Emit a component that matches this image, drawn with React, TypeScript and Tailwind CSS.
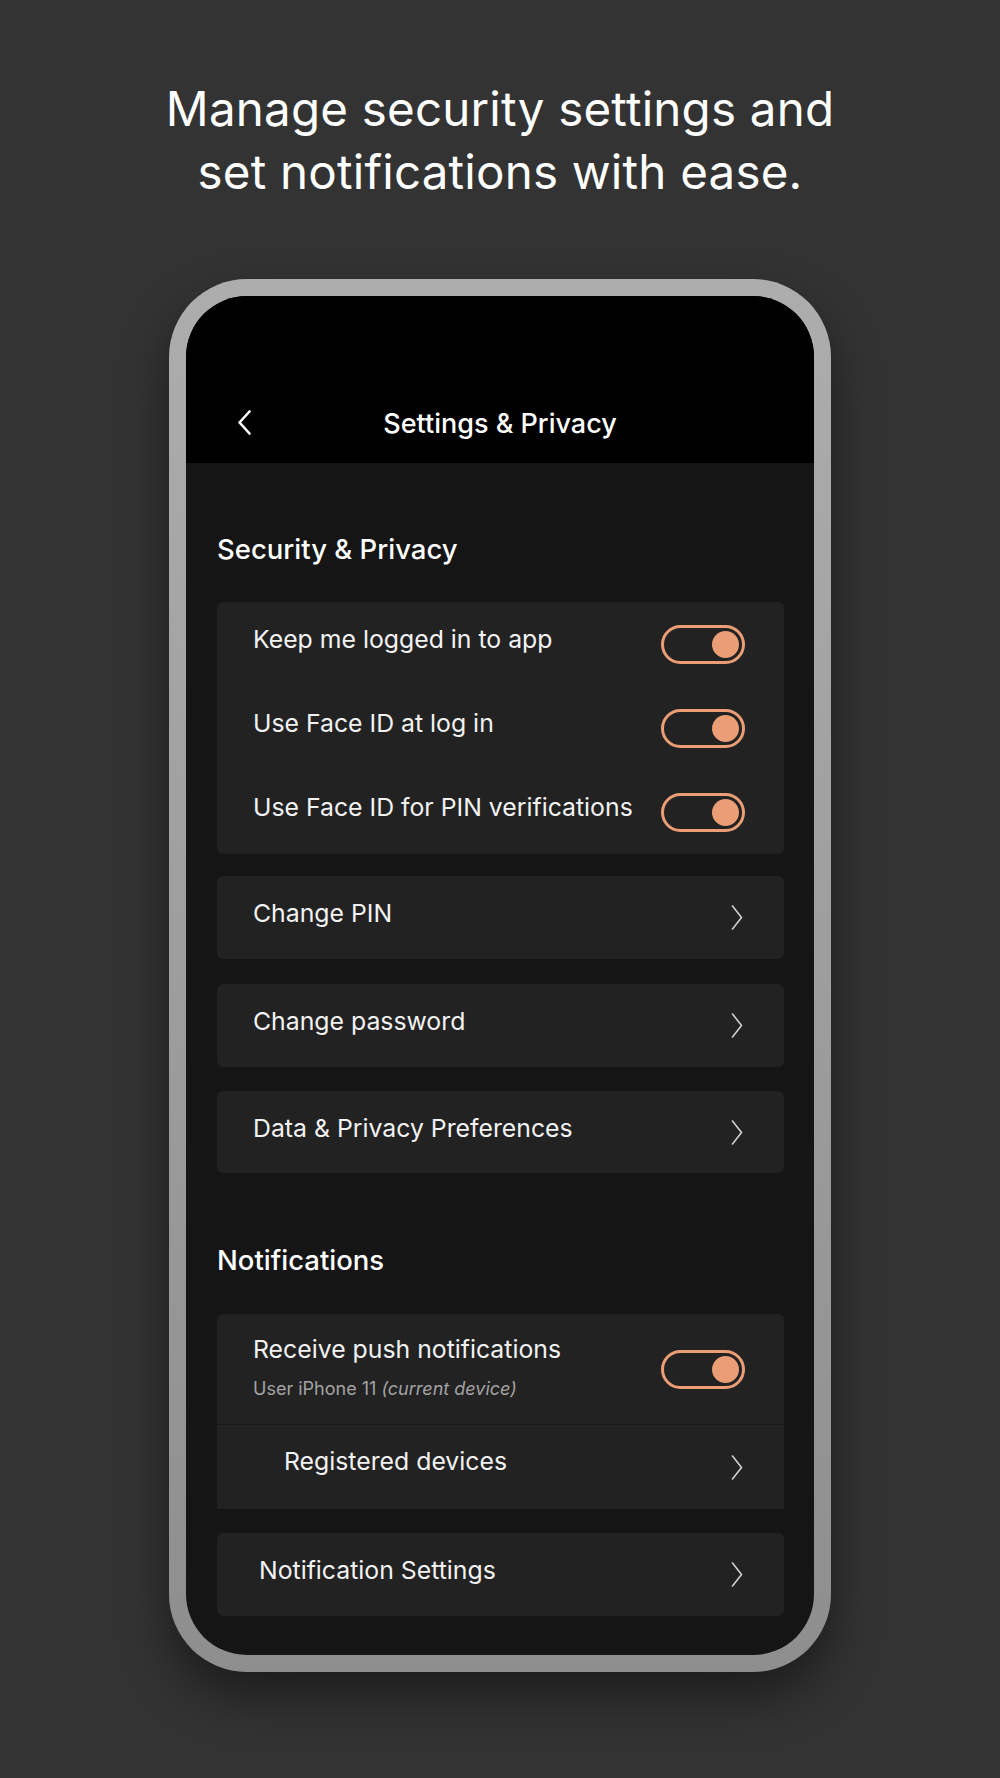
import React from "react";

const Chevron = () => (
  <svg width="12" height="25" viewBox="0 0 12 25" fill="none">
    <polyline points="1.5,1 10.5,12.5 1.5,24" stroke="#d0d0d0" strokeWidth="1.6" strokeLinecap="round" strokeLinejoin="round" />
  </svg>
);

const Toggle = () => (
  <div className="w-[84px] h-[39px] rounded-full border-[3.5px] border-[#eb9d75] flex items-center justify-end pr-[3px] shrink-0">
    <div className="w-[27px] h-[27px] rounded-full bg-[#eb9d75]" />
  </div>
);

const NavCard = ({ label, h = "h-[83px]", pl = "pl-[36px]", mt }: { label: string; h?: string; pl?: string; mt: string }) => (
  <div className={`${mt} ${h} ${pl} pr-[41px] rounded-[6px] bg-[#222222] flex items-center justify-between`}>
    <span className="text-[24.8px] leading-[30px] text-[#f2f2f2] mb-[9px]">{label}</span>
    <Chevron />
  </div>
);

export default function App() {
  return (
    <div className="w-[1000px] h-[1778px] bg-[#333333] flex flex-col items-center font-['Inter','Lato',sans-serif] overflow-hidden">
      <h1 className="pt-[77px] text-[47.5px] leading-[63px] text-white text-center font-normal tracking-[0.2px]">
        Manage security settings and
        <br />
        set notifications with ease.
      </h1>
      <div className="mt-[76px] w-[662px] h-[1393px] rounded-[78px] p-[17px] bg-gradient-to-b from-[#adadad] to-[#8e8e8e] shadow-[0_24px_50px_rgba(0,0,0,0.45)]">
        <div className="h-full rounded-[61px] overflow-hidden bg-[#151515] flex flex-col">
          <div className="h-[167px] bg-black shrink-0 pt-[102px]">
            <div className="grid grid-cols-[1fr_auto_1fr] items-center h-[48px]">
              <div className="pl-[52px] flex items-center">
                <svg width="13" height="25" viewBox="0 0 13 25" fill="none">
                  <polyline points="11.5,1.5 1.5,12.5 11.5,23.5" stroke="#ffffff" strokeWidth="2.6" strokeLinecap="round" strokeLinejoin="round" />
                </svg>
              </div>
              <div className="text-white text-[27px] font-medium leading-[32px] pt-[4px]">Settings &amp; Privacy</div>
              <div />
            </div>
          </div>

          <div className="pl-[31px] pr-[30px] flex flex-col">
            <h2 className="mt-[69px] h-[34px] text-[27.5px] leading-[34px] font-medium text-white">Security &amp; Privacy</h2>

            <div className="mt-[36px] rounded-[6px] bg-[#222222] flex flex-col">
              {["Keep me logged in to app", "Use Face ID at log in", "Use Face ID for PIN verifications"].map((t) => (
                <div key={t} className="h-[84px] pl-[36px] pr-[39px] flex items-center justify-between">
                  <span className="text-[24.8px] leading-[30px] text-[#f2f2f2] mb-[10px]">{t}</span>
                  <Toggle />
                </div>
              ))}
            </div>

            <NavCard mt="mt-[22px]" label="Change PIN" />
            <NavCard mt="mt-[25px]" label="Change password" />
            <NavCard mt="mt-[24px]" h="h-[82px]" label="Data & Privacy Preferences" />

            <h2 className="mt-[70px] h-[34px] text-[27.5px] leading-[34px] font-medium text-white">Notifications</h2>

            <div className="mt-[37px] rounded-t-[6px] bg-[#222222] flex flex-col">
              <div className="h-[111px] pl-[36px] pr-[39px] flex items-center justify-between border-b border-[#191919] ml-0">
                <div className="flex flex-col self-start pt-[20px]">
                  <span className="text-[24.8px] leading-[30px] text-[#f2f2f2]">Receive push notifications</span>
                  <span className="mt-[13px] text-[18px] leading-[24px] text-[#a3a3a3]">
                    User iPhone 11 <i>(current device)</i>
                  </span>
                </div>
                <Toggle />
              </div>
              <div className="h-[84px] pl-[67px] pr-[41px] flex items-center justify-between">
                <span className="text-[24.8px] leading-[30px] text-[#f2f2f2] mb-[12px]">Registered devices</span>
                <Chevron />
              </div>
            </div>

            <NavCard mt="mt-[24px]" pl="pl-[42px]" label="Notification Settings" />
          </div>
        </div>
      </div>
    </div>
  );
}
